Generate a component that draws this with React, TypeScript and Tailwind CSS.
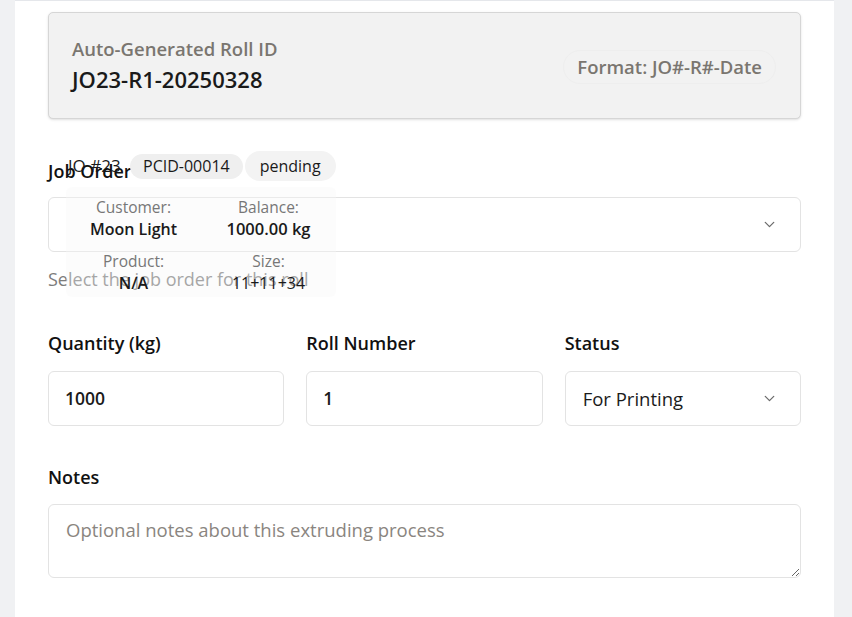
import { ChevronDown } from 'lucide-react';

const font = { fontFamily: '"Open Sans", "Noto Sans", sans-serif' };

function Field({ label, children }: { label: string; children: React.ReactNode }) {
  return (
    <div className="flex flex-col">
      <label className="h-6 text-[18px] leading-6 font-semibold text-[#111]">{label}</label>
      <div className="mt-4">{children}</div>
    </div>
  );
}

export default function App() {
  return (
    <div className="w-[852px] h-[617px] overflow-hidden bg-[#f0f1f3] flex" style={font}>
      {/* Card */}
      <div className="ml-[15px] w-[819px] h-full bg-white border-t border-[#e5e7eb] px-[33px] pt-[11px]">
        {/* Roll ID box */}
        <div className="h-[107px] rounded-[5px] border border-[#d6d6d6] bg-[#f2f2f2] shadow-sm flex items-center justify-between pl-[23px] pr-[24px]">
          <div className="flex flex-col -mt-[2px]">
            <span className="text-[18.5px] leading-6 font-semibold text-[#7a7670]">Auto-Generated Roll ID</span>
            <span className="text-[22px] leading-7 font-semibold text-[#1a1a1a] mt-[4px]">JO23-R1-20250328</span>
          </div>
          <span className="rounded-full border border-[#eeeeee] px-[13px] py-[4px] text-[18.5px] leading-6 font-semibold text-[#7a7670] mt-[2px]">
            Format: JO#-R#-Date
          </span>
        </div>

        {/* Job Order */}
        <div className="relative mt-[40px]">
          <label className="block h-6 text-[18px] leading-6 font-semibold text-[#111]">Job Order</label>
          <div className="mt-[14px] h-[55px] rounded-[6px] border border-[#e3e3e3] bg-white flex items-center justify-end pr-[22px]">
            <ChevronDown size={17} strokeWidth={1.8} className="text-[#6b6b6b]" />
          </div>
          <p className="mt-[15px] text-[18px] leading-6 text-[#7c7c7c]">Select the job order for this roll</p>

          {/* Overlaid option preview */}
          <div className="absolute left-[18px] top-[-8px] w-[270px]">
            <div className="flex items-center h-[30px] whitespace-nowrap">
              <span className="shrink-0 text-[17px] leading-6 font-medium text-[#1a1a1a] w-[64px] pl-[2px]">JO #23</span>
              <span className="shrink-0 h-[25px] px-[13px] rounded-full bg-[#efefef] text-[16px] leading-[25px] font-medium text-[#1a1a1a]">PCID-00014</span>
              <span className="shrink-0 ml-[2px] h-[30px] px-[15px] rounded-full bg-[#f3f3f3] text-[16px] leading-[30px] font-medium text-[#1a1a1a]">pending</span>
            </div>
            <div className="mt-[6px] h-[110px] rounded-[6px] bg-[#f6f6f6]/35 grid grid-cols-2 pt-[9px] text-center">
              <div className="flex flex-col">
                <span className="text-[15.5px] leading-[22px] text-[#777]">Customer:</span>
                <span className="text-[16px] leading-[22px] font-semibold text-[#1a1a1a]">Moon Light</span>
              </div>
              <div className="flex flex-col">
                <span className="text-[15.5px] leading-[22px] text-[#777]">Balance:</span>
                <span className="text-[16.5px] leading-[22px] font-semibold text-[#1a1a1a]">1000.00 kg</span>
              </div>
              <div className="flex flex-col mt-[6px]">
                <span className="text-[15.5px] leading-[22px] text-[#777]">Product:</span>
                <span className="text-[16px] leading-[22px] font-semibold text-[#1a1a1a]">N/A</span>
              </div>
              <div className="flex flex-col mt-[6px]">
                <span className="text-[15.5px] leading-[22px] text-[#777]">Size:</span>
                <span className="text-[16px] leading-[22px] font-medium text-[#1a1a1a]">11+11+34</span>
              </div>
            </div>
          </div>
        </div>

        {/* Quantity / Roll / Status */}
        <div className="mt-[40px] grid grid-cols-3 gap-[22px]">
          <Field label="Quantity (kg)">
            <div className="h-[55px] rounded-[6px] border border-[#e3e3e3] flex items-center px-[16px] text-[17.5px] font-semibold text-[#1a1a1a]">1000</div>
          </Field>
          <Field label="Roll Number">
            <div className="h-[55px] rounded-[6px] border border-[#e3e3e3] flex items-center px-[16px] text-[17.5px] font-semibold text-[#1a1a1a]">1</div>
          </Field>
          <Field label="Status">
            <div className="h-[55px] rounded-[6px] border border-[#e3e3e3] flex items-center justify-between pl-[17px] pr-[22px] text-[18.5px] text-[#1a1a1a]">
              <span>For Printing</span>
              <ChevronDown size={17} strokeWidth={1.8} className="text-[#6b6b6b]" />
            </div>
          </Field>
        </div>

        {/* Notes */}
        <div className="mt-[39px]">
          <label className="block h-6 text-[18px] leading-6 font-semibold text-[#111]">Notes</label>
          <textarea
            placeholder="Optional notes about this extruding process"
            className="mt-[15px] block w-full h-[74px] rounded-[6px] border border-[#e3e3e3] px-[17px] pt-[13px] text-[18.5px] leading-6 text-[#1a1a1a] placeholder:text-[#8a8580] outline-none"
            style={font}
          />
        </div>
      </div>
    </div>
  );
}
